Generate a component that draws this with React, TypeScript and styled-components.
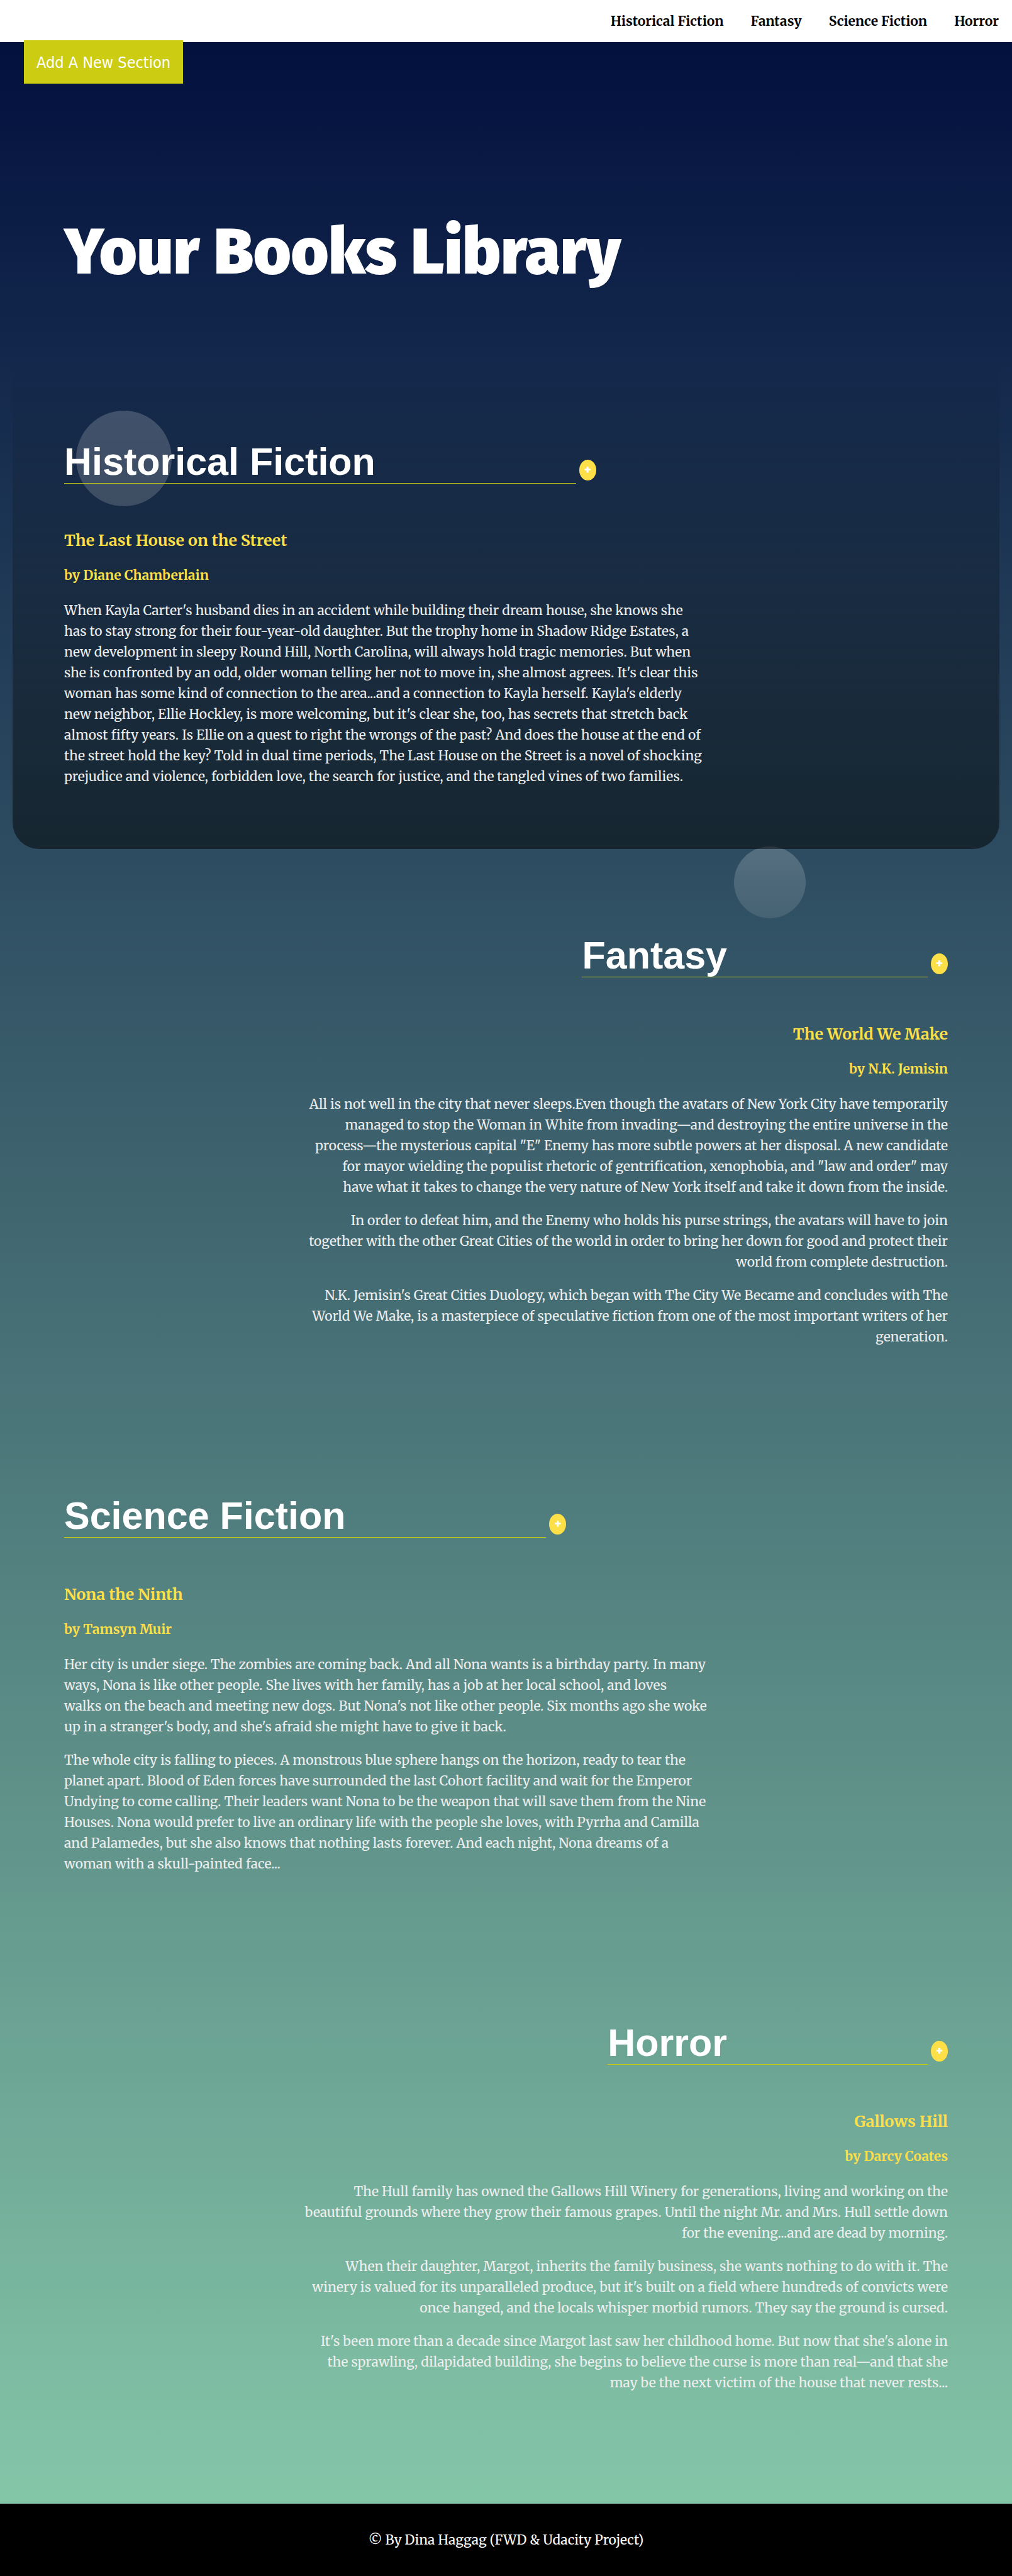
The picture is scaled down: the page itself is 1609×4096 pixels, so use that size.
import React from "react";
import styled, { createGlobalStyle } from "styled-components";

const serif = `Merriweather, "DejaVu Serif Condensed", "DejaVu Serif", serif`;
const sans = `"Fira Sans", "Noto Sans", "Open Sans", sans-serif`;
const arial = `Arial, "Liberation Sans", sans-serif`;
const condensed = `Tahoma, "DejaVu Sans Condensed", "DejaVu Sans", sans-serif`;

const GlobalStyle = createGlobalStyle`
  * { box-sizing: border-box; }
  body {
    margin: 0;
    background: linear-gradient(0deg, rgb(136, 203, 171) 0%, rgb(0, 13, 60) 100%);
    color: #fff;
    font-family: ${serif};
    font-size: 21px;
    line-height: 33px;
  }
`;

const Header = styled.header`
  background: #fff;
`;

const Nav = styled.nav`
  display: flex;
  justify-content: flex-end;
  gap: 43px;
  padding: 17px 21px;
`;

const NavLink = styled.a`
  color: #000;
  font-size: 21px;
  font-weight: 700;
  text-decoration: none;
`;

const AddSection = styled.button`
  position: absolute;
  top: 64px;
  left: 38px;
  padding: 19px 20px 17px;
  border: 0;
  background: #cccc12;
  color: #fff;
  font-family: ${condensed};
  font-size: 25px;
  line-height: 33px;
  white-space: nowrap;
  cursor: pointer;
`;

const Main = styled.main`
  isolation: isolate;
  padding-bottom: 77px;
`;

const Title = styled.h1`
  margin: 0;
  padding: 266px 102px 96px;
  font-family: ${sans};
  font-size: 102px;
  font-weight: 900;
  line-height: 136px;
`;

const Section = styled.section<{ $end: boolean; $active: boolean }>`
  position: relative;
  display: flex;
  flex-direction: column;
  align-items: ${(p) => (p.$end ? "flex-end" : "flex-start")};
  margin: 0 20px;
  padding: 135px 82px 99px;
  border-radius: 42px;
  text-align: ${(p) => (p.$end ? "right" : "left")};
  background: ${(p) =>
    p.$active ? "linear-gradient(180deg, rgba(0, 0, 0, 0) 0%, rgba(0, 0, 0, 0.5) 100%)" : "none"};
`;

const BigBubble = styled.span`
  position: absolute;
  z-index: -1;
  top: 88px;
  left: 101px;
  width: 152px;
  height: 152px;
  border-radius: 50%;
  background: rgba(255, 255, 255, 0.2);
`;

const SmallBubble = styled.span`
  position: absolute;
  z-index: -1;
  top: -4px;
  right: 308px;
  width: 114px;
  height: 114px;
  border-radius: 50%;
  background: linear-gradient(0deg, rgba(255, 255, 255, 0.1) 0%, rgba(255, 255, 255, 0.2) 100%);
`;

const HeadingRow = styled.div`
  display: flex;
  align-items: flex-end;
  gap: 5px;
  margin-bottom: 74px;
`;

const Heading = styled.h2`
  margin: 0;
  padding-right: 319px;
  border-bottom: 1px solid #cccc12;
  font-family: ${arial};
  font-size: 61px;
  font-weight: 700;
  line-height: 68px;
`;

const PlusButton = styled.button`
  width: 27px;
  height: 33px;
  margin-bottom: 5px;
  padding: 0;
  border: 0;
  border-radius: 50%;
  background: #fddf47;
  color: #fff;
  font-family: ${sans};
  font-size: 21px;
  font-weight: 700;
  line-height: 33px;
  text-align: center;
  cursor: pointer;
`;

const BookTitle = styled.h3`
  margin: 0 0 22px;
  color: #fddf47;
  font-size: 25px;
  font-weight: 700;
`;

const Author = styled.h4`
  margin: 0 0 23px;
  color: #fddf47;
  font-size: 21px;
  font-weight: 700;
`;

const Blurb = styled.div`
  display: flex;
  flex-direction: column;
  gap: 20px;
  max-width: 1025px;
`;

const Paragraph = styled.p`
  margin: 0;
  color: #eee;
`;

const Footer = styled.footer`
  padding: 41px 20px;
  background: #000;
  text-align: center;
`;

type Genre = {
  id: string;
  name: string;
  book: string;
  author: string;
  paragraphs: string[];
};

const genres: Genre[] = [
  {
    id: "historical-fiction",
    name: "Historical Fiction",
    book: "The Last House on the Street",
    author: "by Diane Chamberlain",
    paragraphs: [
      "When Kayla Carter's husband dies in an accident while building their dream house, she knows she has\u00a0to stay strong for their four-year-old daughter. But the trophy home in Shadow Ridge Estates, a new development in sleepy Round Hill, North Carolina, will always hold tragic memories. But when she is confronted by an odd, older woman telling her not to move in, she almost agrees. It's clear this woman has some kind of connection to the area...and a connection to Kayla herself. Kayla's elderly new neighbor, Ellie Hockley, is more welcoming, but it's clear she, too, has secrets that stretch back almost fifty years. Is Ellie on a quest to right the wrongs of the past? And does the house at the end of the street hold the key? Told in dual time periods, The Last House on the Street is a novel of shocking prejudice and violence, forbidden love, the search for justice, and the tangled vines of two families.",
    ],
  },
  {
    id: "fantasy",
    name: "Fantasy",
    book: "The World We Make",
    author: "by N.K. Jemisin",
    paragraphs: [
      "All is not well in the city that never sleeps.Even though the avatars of New York City have temporarily managed to stop the Woman in White from invading—and destroying the entire universe in the process—the mysterious capital \"E\" Enemy has more subtle powers at her disposal. A new candidate for mayor wielding the populist rhetoric of gentrification, xenophobia, and \"law and order\" may have\u00a0what it takes to change the very nature of New York itself and take it down from the inside.",
      "In order to defeat him, and the Enemy who holds his purse strings, the avatars will have to join together with the other Great Cities of the world in order to bring her down for good and protect their world from complete destruction.",
      "N.K. Jemisin's Great Cities Duology, which began with The City We Became and concludes with The World We Make, is a masterpiece of speculative fiction from one of the most important writers of her generation.",
    ],
  },
  {
    id: "science-fiction",
    name: "Science Fiction",
    book: "Nona the Ninth",
    author: "by Tamsyn Muir",
    paragraphs: [
      "Her city is under siege. The zombies are coming back. And all Nona wants is a birthday party. In many ways, Nona is like other people. She lives with her family, has a job at her local school, and loves walks\u00a0on the beach and meeting new dogs. But Nona's not like other people. Six months ago she woke up in a stranger's body, and she's afraid she might have to give it back.",
      "The whole city is falling to pieces. A monstrous blue sphere hangs on the horizon, ready to tear the planet apart. Blood of Eden forces have surrounded the last Cohort facility and wait for the Emperor Undying to come calling. Their leaders want Nona to be the weapon that will save them from the Nine Houses. Nona would prefer to live an ordinary life with the people she loves, with Pyrrha and Camilla and Palamedes, but she also knows that nothing lasts forever. And each night, Nona dreams of a woman with a skull-painted face...",
    ],
  },
  {
    id: "horror",
    name: "Horror",
    book: "Gallows Hill",
    author: "by Darcy Coates",
    paragraphs: [
      "The Hull family has owned the Gallows Hill Winery for generations, living and working on the beautiful grounds where they grow their famous grapes. Until the night Mr. and Mrs. Hull settle down for the evening...and are dead by morning.",
      "When their daughter, Margot, inherits the family business, she wants nothing to do with it. The winery is valued for its unparalleled produce, but it's built on a field where hundreds of convicts were once hanged, and the locals whisper morbid rumors. They say the ground is cursed.",
      "It's been more than a decade since Margot last saw her childhood home. But now that she's alone in the sprawling, dilapidated building, she begins to believe the curse is more than real—and that she may be the next victim of the house that never rests...",
    ],
  },
];

export default function App() {
  return (
    <>
      <GlobalStyle />
      <Header>
        <Nav>
          {genres.map((g) => (
            <NavLink key={g.id} href={`#${g.id}`}>
              {g.name}
            </NavLink>
          ))}
        </Nav>
        <AddSection type="button">Add A New Section</AddSection>
      </Header>
      <Main>
        <Title>Your Books Library</Title>
        {genres.map((g, i) => (
          <Section key={g.id} id={g.id} $end={i % 2 === 1} $active={i === 0}>
            {i === 0 && <BigBubble />}
            {i === 1 && <SmallBubble />}
            <HeadingRow>
              <Heading>{g.name}</Heading>
              <PlusButton type="button">+</PlusButton>
            </HeadingRow>
            <BookTitle>{g.book}</BookTitle>
            <Author>{g.author}</Author>
            <Blurb>
              {g.paragraphs.map((text) => (
                <Paragraph key={text}>{text}</Paragraph>
              ))}
            </Blurb>
          </Section>
        ))}
      </Main>
      <Footer>© By Dina Haggag (FWD &amp; Udacity Project)</Footer>
    </>
  );
}
